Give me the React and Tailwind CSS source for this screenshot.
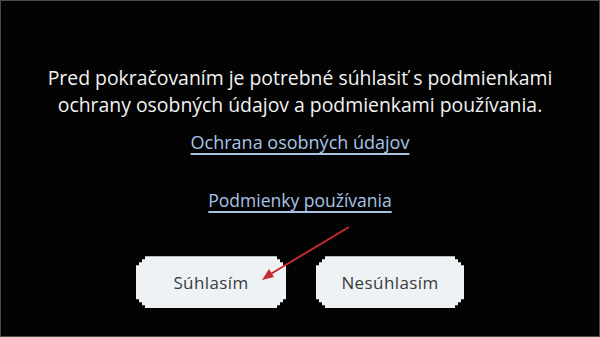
import React from 'react';

const pixelCorners =
  '[clip-path:polygon(9px_0,calc(100%-9px)_0,calc(100%-9px)_3px,calc(100%-6px)_3px,calc(100%-6px)_6px,calc(100%-3px)_6px,calc(100%-3px)_9px,100%_9px,100%_calc(100%-9px),calc(100%-3px)_calc(100%-9px),calc(100%-3px)_calc(100%-6px),calc(100%-6px)_calc(100%-6px),calc(100%-6px)_calc(100%-3px),calc(100%-9px)_calc(100%-3px),calc(100%-9px)_100%,9px_100%,9px_calc(100%-3px),6px_calc(100%-3px),6px_calc(100%-6px),3px_calc(100%-6px),3px_calc(100%-9px),0_calc(100%-9px),0_9px,3px_9px,3px_6px,6px_6px,6px_3px,9px_3px)]';

function PixelButton({ label, className }) {
  return (
    <button
      className={`h-[52px] bg-[#eef2f4] text-[#383c40] text-[17px] tracking-[0.4px] ${pixelCorners} ${className}`}
    >
      {label}
    </button>
  );
}

export default function App() {
  return (
    <div className="relative w-[600px] h-[337px] bg-[#030303] border border-[#4a4a4a] overflow-hidden font-['Open_Sans',sans-serif]">
      <div className="flex flex-col items-center pt-[63px]">
        <p className="text-[#f2f2f2] text-[19.4px] leading-[27px] text-center">
          Pred pokračovaním je potrebné súhlasiť s podmienkami
          <br />
          ochrany osobných údajov a podmienkami používania.
        </p>

        <a className="mt-[11px] text-[#a9c3e6] text-[18px] underline underline-offset-[4px] decoration-[1.5px]">
          Ochrana osobných údajov
        </a>
        <a className="mt-[31px] text-[#a9c3e6] text-[17.5px] underline underline-offset-[4px] decoration-[1.5px]">
          Podmienky používania
        </a>

        <div className="flex gap-[30px] mt-[43px]">
          <PixelButton label="Súhlasím" className="w-[150px]" />
          <PixelButton label="Nesúhlasím" className="w-[148px]" />
        </div>
      </div>

      {/* red annotation arrow */}
      <svg className="absolute left-0 top-0 pointer-events-none" width="600" height="337">
        <line x1="348" y1="226" x2="268" y2="274" stroke="#c42a2f" strokeWidth="2" />
        <polygon points="261,279 268,268 273,276" fill="#c42a2f" />
      </svg>
    </div>
  );
}
